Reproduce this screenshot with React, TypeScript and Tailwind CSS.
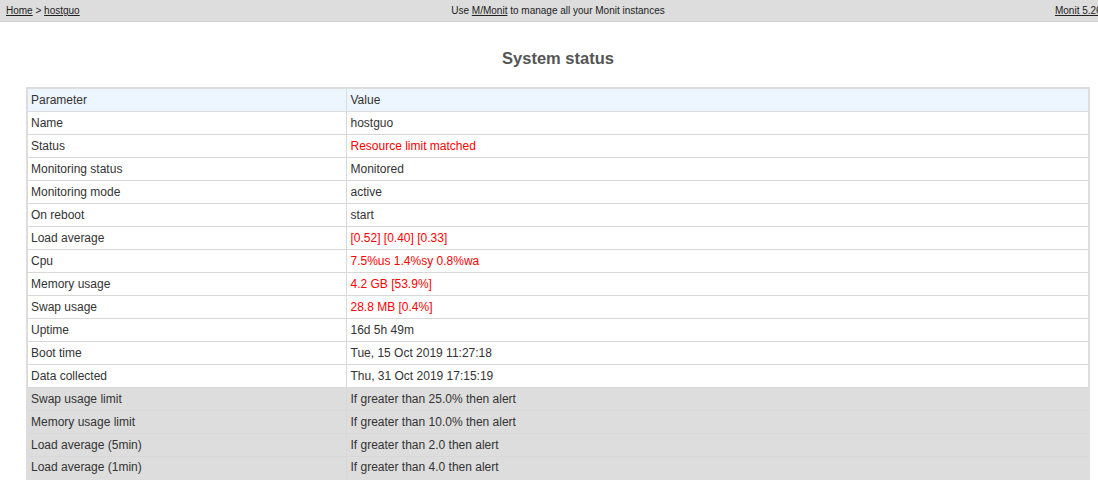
import React from "react";

type Row = { param: string; value: string; alert?: boolean; rule?: boolean };

const rows: Row[] = [
	{ param: "Name", value: "hostguo" },
	{ param: "Status", value: "Resource limit matched", alert: true },
	{ param: "Monitoring status", value: "Monitored" },
	{ param: "Monitoring mode", value: "active" },
	{ param: "On reboot", value: "start" },
	{ param: "Load average", value: "[0.52] [0.40] [0.33]", alert: true },
	{ param: "Cpu", value: "7.5%us 1.4%sy 0.8%wa", alert: true },
	{ param: "Memory usage", value: "4.2 GB [53.9%]", alert: true },
	{ param: "Swap usage", value: "28.8 MB [0.4%]", alert: true },
	{ param: "Uptime", value: "16d 5h 49m" },
	{ param: "Boot time", value: "Tue, 15 Oct 2019 11:27:18" },
	{ param: "Data collected", value: "Thu, 31 Oct 2019 17:15:19" },
	{ param: "Swap usage limit", value: "If greater than 25.0% then alert", rule: true },
	{ param: "Memory usage limit", value: "If greater than 10.0% then alert", rule: true },
	{ param: "Load average (5min)", value: "If greater than 2.0 then alert", rule: true },
	{ param: "Load average (1min)", value: "If greater than 4.0 then alert", rule: true },
];

export default function App() {
	return (
		<div className="w-[1098px] h-[490px] overflow-hidden bg-white text-[#333] font-['Liberation_Sans',Arial,sans-serif]">
			<div className="w-[1116px]">
				<div className="h-[22px] bg-[#dddddd] border-b border-[#cfcfcf] px-[6px] flex items-center justify-between text-[10px] text-[#222]">
					<div className="flex-1">
						<a className="underline">Home</a> &gt; <a className="underline">hostguo</a>
					</div>
					<div>
						Use <a className="underline">M/Monit</a> to manage all your Monit instances
					</div>
					<div className="flex-1 text-right">
						<a className="underline">Monit 5.26.0</a>
					</div>
				</div>

				<h1 className="text-center font-bold text-[16.5px] text-[#555] mt-[26px] mb-[19px] leading-[20px]">
					System status
				</h1>

				<table className="mx-auto w-[1064px] border-collapse border-2 border-[#dddddd] text-[12px] leading-[14px]">
					<tbody>
						<tr className="bg-[#edf5fe] h-[23px]">
							<td className="w-[319px] border border-[#dddddd] pl-[3px] pr-[4px]">Parameter</td>
							<td className="border border-[#dddddd] px-[4px]">Value</td>
						</tr>
						{rows.map((r) => (
							<tr key={r.param} className={`h-[23px] ${r.rule ? "bg-[#dddddd]" : "bg-white"}`}>
								<td className="border border-[#d8d8d8] pl-[3px] pr-[4px]">{r.param}</td>
								<td className={`border border-[#d8d8d8] px-[4px] ${r.alert ? "text-[#ff0000]" : ""}`}>
									{r.value}
								</td>
							</tr>
						))}
					</tbody>
				</table>
			</div>
		</div>
	);
}
